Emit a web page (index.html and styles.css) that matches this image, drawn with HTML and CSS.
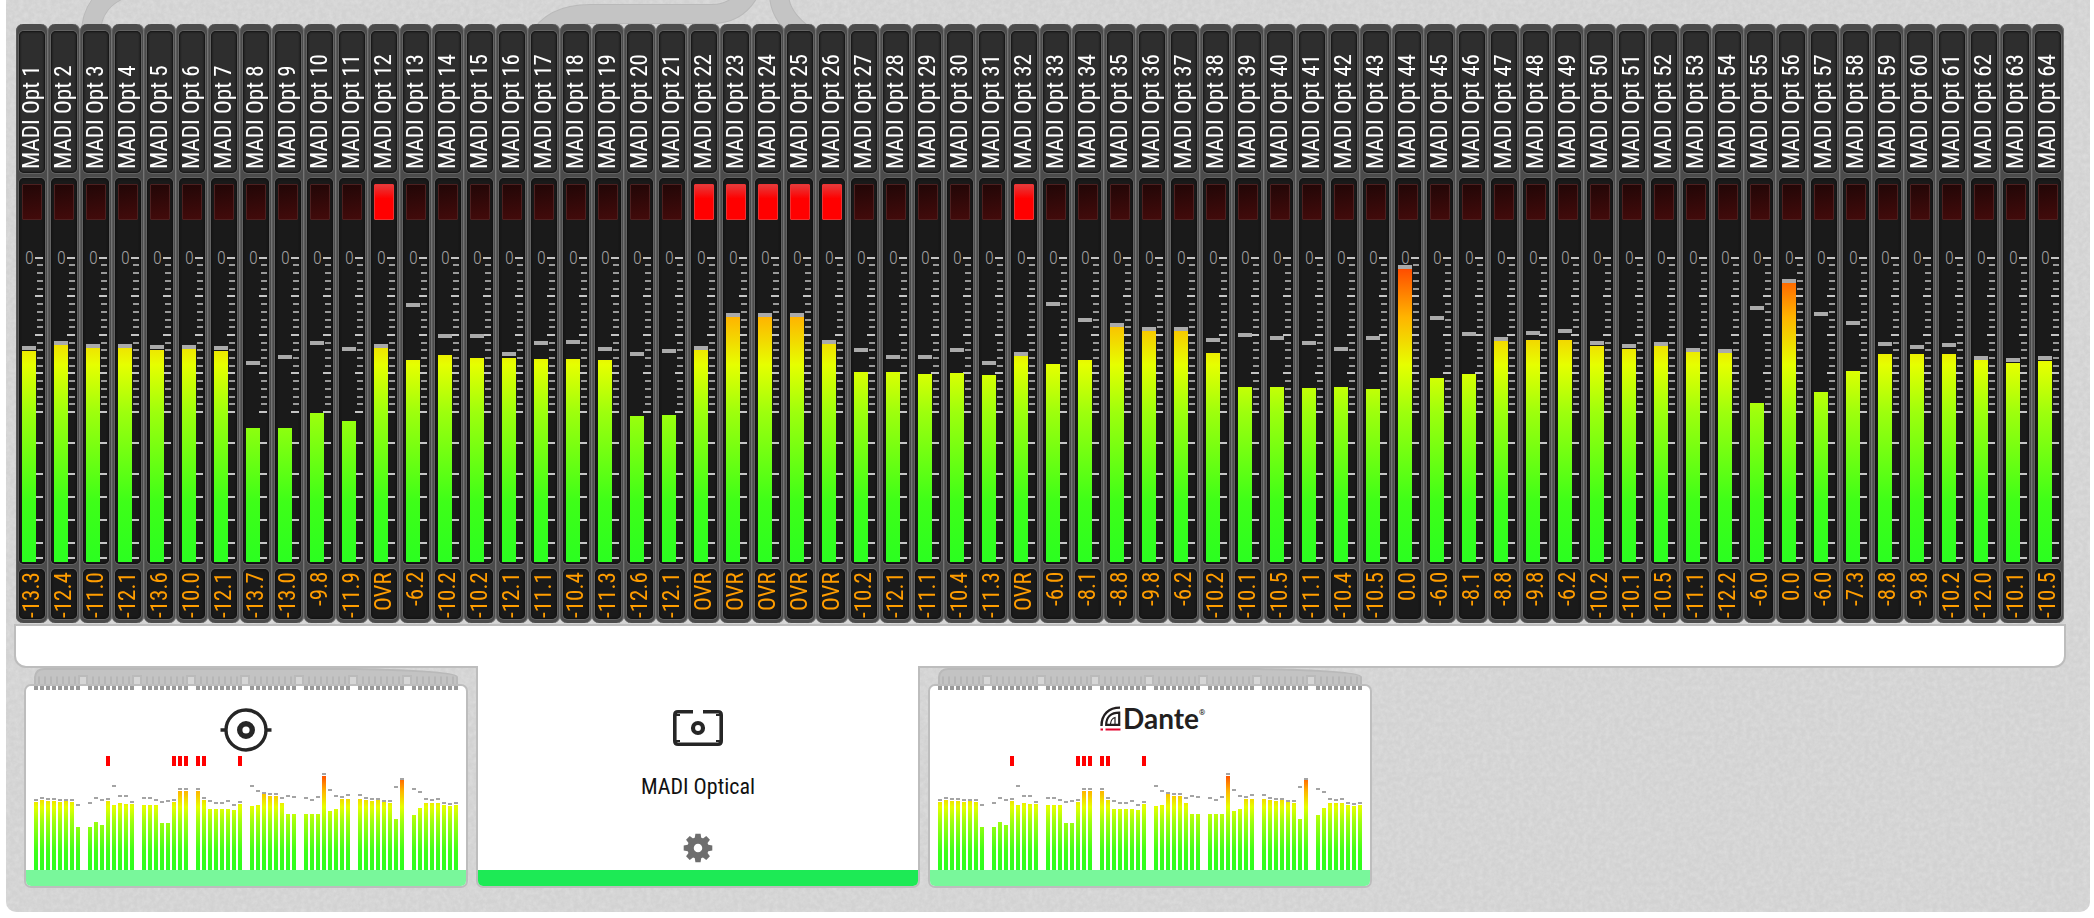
FILE: index.html
```html
<!DOCTYPE html>
<html lang="en">
<head>
<meta charset="utf-8">
<title>MADI Optical – Level Meters</title>
<link rel="stylesheet" href="styles.css">
</head>
<body>
<svg class="defs" aria-hidden="true">
  <symbol id="scale" viewBox="0 0 26 342">
    <g fill="#999">
      <path d="M18 44h6v2h-6zM18 52h6v2h-6zM18 60h6v2h-6zM18 68h6v2h-6z"/>
      <path d="M18 83h6v2h-6zM18 91h6v2h-6zM18 99h6v2h-6zM18 106h6v2h-6z"/>
      <path d="M18 122h6v2h-6zM18 129h6v2h-6zM18 137h6v2h-6zM18 145h6v2h-6z"/>
      <path d="M18 160h6v2h-6zM18 168h6v2h-6zM18 176h6v2h-6zM18 183h6v2h-6z"/>
    </g>
    <g fill="#c4c4c4">
      <path d="M16 37h8v2h-8zM16 75h8v2h-8zM16 114h8v2h-8zM16 152h8v2h-8zM16 191h8v2h-8z"/>
      <path d="M17 222h7v2h-7zM17 253h7v2h-7zM17 276h7v2h-7zM17 299h7v2h-7zM17 322h7v2h-7zM17 337h7v2h-7z"/>
    </g>
  </symbol>
  <symbol id="harness" viewBox="0 0 424 18">
    <path d="M1 18V9Q2 1 10 1H320Q423 3 423 9V18" fill="#c3c3c3" stroke="#b9b9b9" stroke-width="2"/>
    <g stroke="#b6b6b6" stroke-width="2" stroke-dasharray="2 4">
      <path d="M4 13H44M58 13H98M112 13H152M166 13H206M220 13H260M274 13H314M328 13H368M382 13H422" stroke-width="9"/>
    </g>
    <path d="M45 18V8h8v10M99 18V8h8v10M153 18V8h8v10M207 18V8h8v10M261 18V8h8v10M315 18V8h8v10M369 18V8h8v10" fill="#d6d6d6" stroke="#bababa" stroke-width="2"/>
  </symbol>
</svg>

<main class="panel">
  <svg class="texture" aria-hidden="true">
    <filter id="grain" x="0" y="0" width="100%" height="100%">
      <feTurbulence type="fractalNoise" baseFrequency="0.22" numOctaves="3" seed="4"/>
      <feColorMatrix values="0 0 0 0 1  0 0 0 0 1  0 0 0 0 1  1.2 0 0 0 -0.35"/>
    </filter>
    <rect width="100%" height="100%" filter="url(#grain)" opacity="0.3"/>
    <g fill="none" stroke="#b9b9b9" stroke-width="20">
      <path d="M85 36Q84 -2 124 -14"/>
      <path d="M532 40Q546 14 584 14H706Q736 14 748 -18"/>
      <path d="M773 -8Q772 16 800 36"/>
    </g>
    <g fill="none" stroke="#c4c4c4" stroke-width="18">
      <path d="M85 36Q84 -2 124 -14"/>
      <path d="M532 40Q546 14 584 14H706Q736 14 748 -18"/>
      <path d="M773 -8Q772 16 800 36"/>
    </g>
  </svg>

  <section class="strips" id="strips" aria-label="Channel levels"></section>
  <div class="shelf"></div>

  <nav class="tabs" aria-label="Ports">
    <div class="port">
      <svg class="harness" aria-hidden="true"><use href="#harness"/></svg>
      <button class="tab" type="button" aria-label="MADI BNC">
        <span class="sockets"></span>
        <span class="emblem">
          <svg width="52" height="52" viewBox="0 0 52 52" fill="none" stroke="#262626">
            <circle cx="26" cy="26" r="20" stroke-width="3.4"/>
            <circle cx="26" cy="26" r="6.3" stroke-width="5.4"/>
            <path d="M.5 26H6M46 26h5.500" stroke-width="3.600"/>
          </svg>
        </span>
        <span class="mini"></span>
        <span class="foot"></span>
      </button>
    </div>

    <div class="port port-active">
      <div class="body">
        <svg width="50" height="36" viewBox="0 0 50 36" fill="none" stroke="#262626" aria-hidden="true">
          <path d="M20 1.800H5Q1.800 1.800 1.800 5V31Q1.800 34.200 5 34.200H45Q48.200 34.200 48.200 31V5Q48.200 1.800 45 1.800H30" stroke-width="3.600"/>
          <path d="M3 5h4M43 5h4M3 31h4M43 31h4" stroke-width="2"/>
          <circle cx="25" cy="18" r="5" stroke-width="4.200"/>
        </svg>
        <h1 class="name">MADI Optical</h1>
        <button class="gear" type="button" aria-label="Settings">
          <svg width="30" height="30" viewBox="-15 -15 30 30" aria-hidden="true">
            <circle r="7.500" fill="none" stroke="#6e6e6e" stroke-width="6.500"/>
            <g fill="#6e6e6e">
              <path id="tooth" d="M-3.400 -9L-2.600 -14.300H2.600L3.400 -9z"/>
              <use href="#tooth" transform="rotate(45)"/><use href="#tooth" transform="rotate(90)"/>
              <use href="#tooth" transform="rotate(135)"/><use href="#tooth" transform="rotate(180)"/>
              <use href="#tooth" transform="rotate(225)"/><use href="#tooth" transform="rotate(270)"/>
              <use href="#tooth" transform="rotate(315)"/>
            </g>
          </svg>
        </button>
      </div>
      <div class="foot"></div>
    </div>

    <div class="port">
      <svg class="harness" aria-hidden="true"><use href="#harness"/></svg>
      <button class="tab" type="button">
        <span class="sockets"></span>
        <span class="emblem emblem-dante">
          <svg width="21" height="25" viewBox="0 0 21 25" fill="none">
            <path d="M1.500 20C1.500 8 9 1.600 20 1.600" stroke="#231f20" stroke-width="2.400"/>
            <path d="M6.200 18.800C6.200 11 11 6.600 19.200 6.600V18.800z" stroke="#231f20" stroke-width="2.200"/>
            <path d="M10.500 18C11 14 12.500 12 15 11.500V18" stroke="#231f20" stroke-width="1.200"/>
            <path d="M.5 23.500H3M5.500 23.500H20.500" stroke="#e4002b" stroke-width="2"/>
          </svg>
          <span class="wordmark">Dante</span><span class="reg">®</span>
        </span>
        <span class="mini"></span>
        <span class="foot"></span>
      </button>
    </div>
  </nav>
</main>
<script src="app.js"></script>
</body>
</html>
```
FILE: styles.css
```css
* { box-sizing: border-box; }

body {
  margin: 0;
  background: #fff;
  font-family: "Roboto Condensed", Roboto, sans-serif;
  color: #111;
}

button {
  font: inherit;
  color: inherit;
  border: 0;
  padding: 0;
  background: none;
}

.defs { display: none; }

.panel {
  position: relative;
  isolation: isolate;
  overflow: hidden;
  margin: 0 4px 6px 6px;
  min-height: calc(100vh - 6px);
  padding: 24px 24px 24px 8px;
  background: #d2d2d2;
  border-radius: 0 0 10px 10px;
}

.texture {
  position: absolute;
  inset: 0;
  z-index: -1;
  width: 100%;
  height: 100%;
}

/* channel strips */
.strips {
  display: grid;
  grid-template-columns: repeat(64, 1fr);
  padding: 0 2px;
}

.strip {
  display: flex;
  flex-direction: column;
  gap: 5px;
  padding: 7px 3px 4px;
  border-radius: 7px;
  background: #4b4b4b;
  box-shadow: inset 1px 0 #5a5a5a, inset -1px 0 #747474;
}

.label, .meter, .value {
  border-radius: 5px;
  box-shadow: 0 0 0 1px #636363, inset 0 0 2px 1px #111;
}

.label, .value {
  writing-mode: vertical-rl;
  transform: rotate(180deg);
  font-size: 23px;
  line-height: 26px;
  white-space: nowrap;
}

.label {
  height: 142px;
  padding-top: 4px;
  background: #2e2e2e;
  color: #fff;
}

.value {
  height: 50px;
  padding-bottom: 3px;
  text-align: right;
  background: #1a1a1a;
  color: #ff9d00;
}

.meter {
  height: 386px;
  padding: 6px 0 2px;
  background: #1a1a1a;
}

.led {
  height: 36px;
  margin: 0 3px;
  border: 1px solid #4d2020;
  border-radius: 1px;
  background: linear-gradient(170deg, #220707, #430b0b);
}

.led-on {
  border-color: #e33;
  background: linear-gradient(#e63a3a, #f00 40%);
}

.track {
  display: grid;
  height: 342px;
}

.track > * { grid-area: 1 / 1; }

.scale {
  width: 26px;
  height: 342px;
}

.zero {
  padding: 28px 0 0 6px;
  font-size: 18px;
  line-height: 20px;
  font-weight: 300;
  color: #a0a0a0;
}

.bar {
  align-self: end;
  width: 14px;
  margin-left: 3px;
  background: linear-gradient(to top, #2bff20 0, #3eff18 60px, #9dff0d 149px, #e6ff00 197px, #ffb400 245px, #ff4d00 293px) bottom / 100% 293px no-repeat;
}

.peak {
  align-self: end;
  width: 14px;
  height: 4px;
  margin-left: 3px;
  background: #aaa;
}

/* strip of white joining the meters to the active port */
.shelf {
  height: 44px;
  margin-top: 1px;
  border: 2px solid #bdbdbd;
  border-radius: 0 0 12px 12px;
  background: #fff;
}

/* port tabs */
.tabs {
  display: flex;
  gap: 8px;
  padding-left: 10px;
}

.port {
  width: 444px;
  display: flex;
  flex-direction: column;
}

.harness {
  width: 424px;
  height: 18px;
  margin: 0 0 -2px 10px;
}

.tab {
  display: flex;
  flex-direction: column;
  height: 204px;
  border: 2px solid #bdbdbd;
  border-radius: 7px;
  background: #fff;
  overflow: hidden;
}

.sockets {
  display: flex;
  gap: 8px;
  height: 4px;
  padding: 0 8px;
}

.sockets i {
  width: 46px;
  background: repeating-linear-gradient(90deg, #999 0 4px, transparent 4px 6px);
}

.emblem {
  display: flex;
  justify-content: center;
  height: 66px;
  padding-top: 14px;
}

.emblem-dante {
  justify-content: flex-start;
  padding: 16px 0 0 170px;
}

.wordmark {
  margin-left: 2px;
  font: 700 28px/24px Lato, sans-serif;
  color: #231f20;
}

.reg {
  font-size: 8px;
  line-height: 14px;
}

.mini {
  display: flex;
  gap: 8px;
  height: 114px;
  padding: 0 8px;
}

.mini-group {
  display: flex;
  gap: 2px;
}

.mini-col {
  display: grid;
  width: 4px;
  height: 114px;
}

.mini-col > * { grid-area: 1 / 1; }

.mini-led {
  height: 10px;
  background: #f00;
}

.mini-bar {
  align-self: end;
  background: linear-gradient(to top, #2bff20 0, #3eff18 19px, #9dff0d 48px, #e6ff00 63px, #ffb400 79px, #ff4d00 95px) bottom / 100% 95px no-repeat;
}

.mini-peak {
  align-self: end;
  height: 2px;
  background: #a4a4a4;
}

.foot {
  display: block;
  width: 100%;
  height: 16px;
  background: #79f79b;
}

.port-active {
  position: relative;
  height: 222px;
  margin-top: -2px;
  border: solid #bdbdbd;
  border-width: 0 2px 2px;
  border-radius: 0 0 7px 7px;
  background: #fff;
  overflow: hidden;
}

.port-active .foot { background: #1dea55; }

.body {
  display: flex;
  flex-direction: column;
  align-items: center;
  height: 204px;
  padding-top: 44px;
}

.name {
  margin: 26px 0 31px;
  font-size: 22px;
  line-height: 30px;
  font-weight: 400;
}

.gear {
  width: 30px;
  height: 30px;
}

.gear svg { display: block; }
```
FILE: app.js
```js
// Per channel: bar height, peak-hold centre (both px above the meter floor), readout
const channels = [
  [211, 214, "-13.3"], [217, 219, "-12.4"], [214, 216, "-11.0"], [214, 216, "-12.1"],
  [212, 215, "-13.6"], [213, 215, "-10.0"], [211, 214, "-12.1"], [134, 199, "-13.7"],
  [134, 205, "-13.0"], [149, 219, "-9.8"], [141, 213, "-11.9"], [214, 216, "OVR"],
  [202, 257, "-6.2"], [207, 226, "-10.2"], [204, 226, "-10.2"], [204, 208, "-12.1"],
  [203, 219, "-11.1"], [203, 220, "-10.4"], [202, 213, "-11.3"], [146, 208, "-12.6"],
  [147, 211, "-12.1"], [212, 214, "OVR"], [245, 247, "OVR"], [245, 247, "OVR"],
  [245, 247, "OVR"], [218, 220, "OVR"], [190, 212, "-10.2"], [190, 205, "-12.1"],
  [188, 205, "-11.1"], [189, 212, "-10.4"], [187, 199, "-11.3"], [206, 208, "OVR"],
  [198, 258, "-6.0"], [202, 242, "-8.1"], [235, 237, "-8.8"], [231, 233, "-9.8"],
  [231, 233, "-6.2"], [209, 222, "-10.2"], [175, 227, "-10.1"], [175, 224, "-10.5"],
  [174, 219, "-11.1"], [175, 213, "-10.4"], [173, 224, "-10.5"], [293, 295, "0.0"],
  [184, 244, "-6.0"], [188, 228, "-8.1"], [221, 223, "-8.8"], [222, 229, "-9.8"],
  [222, 231, "-6.2"], [216, 219, "-10.2"], [213, 216, "-10.1"], [216, 218, "-10.5"],
  [210, 212, "-11.1"], [209, 211, "-12.2"], [159, 254, "-6.0"], [279, 281, "0.0"],
  [170, 248, "-6.0"], [191, 239, "-7.3"], [208, 218, "-8.8"], [208, 215, "-9.8"],
  [208, 217, "-10.2"], [202, 204, "-12.0"], [199, 202, "-10.1"], [201, 204, "-10.5"]
];

const MINI_RATIO = 0.322;

document.getElementById("strips").innerHTML = channels.map(([bar, peak, text], i) => `
  <div class="strip">
    <div class="label">MADI Opt ${i + 1}</div>
    <div class="meter">
      <div class="led${text === "OVR" ? " led-on" : ""}"></div>
      <div class="track">
        <svg class="scale" aria-hidden="true"><use href="#scale"/></svg>
        <span class="zero">0</span>
        <div class="bar" style="height:${bar}px"></div>
        <div class="peak" style="margin-bottom:${peak - 2}px"></div>
      </div>
    </div>
    <div class="value">${text}</div>
  </div>`).join("");

const miniColumn = ([bar, peak, text]) => `
  <span class="mini-col">
    ${text === "OVR" ? '<span class="mini-led"></span>' : ""}
    <span class="mini-bar" style="height:${Math.round(bar * MINI_RATIO)}px"></span>
    <span class="mini-peak" style="margin-bottom:${Math.round(peak * MINI_RATIO)}px"></span>
  </span>`;

const groups = Array.from({ length: 8 }, (_, g) => channels.slice(g * 8, g * 8 + 8));

document.querySelectorAll(".mini").forEach(el => {
  el.innerHTML = groups.map(g => `<span class="mini-group">${g.map(miniColumn).join("")}</span>`).join("");
});

document.querySelectorAll(".sockets").forEach(el => {
  el.innerHTML = groups.map(() => "<i></i>").join("");
});
```
